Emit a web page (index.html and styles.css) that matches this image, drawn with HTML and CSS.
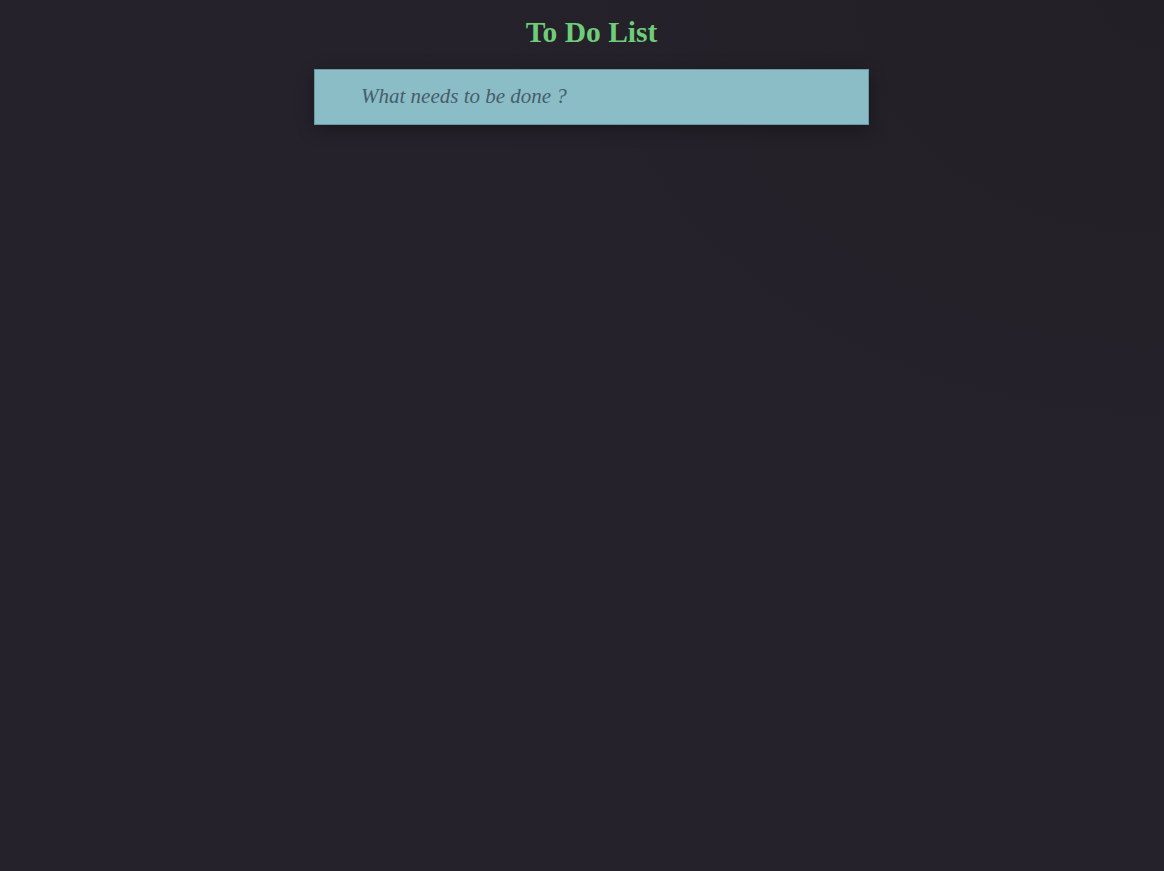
FILE: index.html
```html
<!DOCTYPE html>
<html lang="en">
<head>
<meta charset="utf-8">
<title>To Do List</title>
<link rel="stylesheet" href="styles.css">
</head>
<body>
<main class="app">
  <h1 class="title">To Do List</h1>
  <form class="todo-form">
    <input class="todo-input" type="text" placeholder="What needs to be done ?">
  </form>
</main>
</body>
</html>
```
FILE: styles.css
```css
html, body {
  margin: 0;
  height: 100%;
}
body {
  background: radial-gradient(ellipse at 100% 0%, #221f26 0%, #25222b 45%, #25222b 100%);
  background-color: #25222b;
  padding-left: 19px;
  box-sizing: border-box;
  font-family: "Liberation Serif", "Times New Roman", serif;
}
.app {
  display: flex;
  flex-direction: column;
  align-items: center;
}
.title {
  margin: 16px 0 0;
  font-size: 29.5px;
  line-height: 33px;
  font-weight: bold;
  color: #6fcd79;
}
.todo-form {
  margin: 20px 0 0;
}
.todo-input {
  display: block;
  box-sizing: border-box;
  width: 555px;
  height: 56px;
  margin: 0;
  padding: 0 0 2px 46px;
  border: 1px solid #6b98a2;
  background: #8bbdc7;
  box-shadow: 0 4px 18px rgba(0, 0, 0, 0.3);
  font-family: "Liberation Serif", "Times New Roman", serif;
  font-style: italic;
  font-size: 21px;
  color: #3f5560;
  outline: none;
}
.todo-input::placeholder {
  color: #465e69;
  opacity: 1;
}
```
